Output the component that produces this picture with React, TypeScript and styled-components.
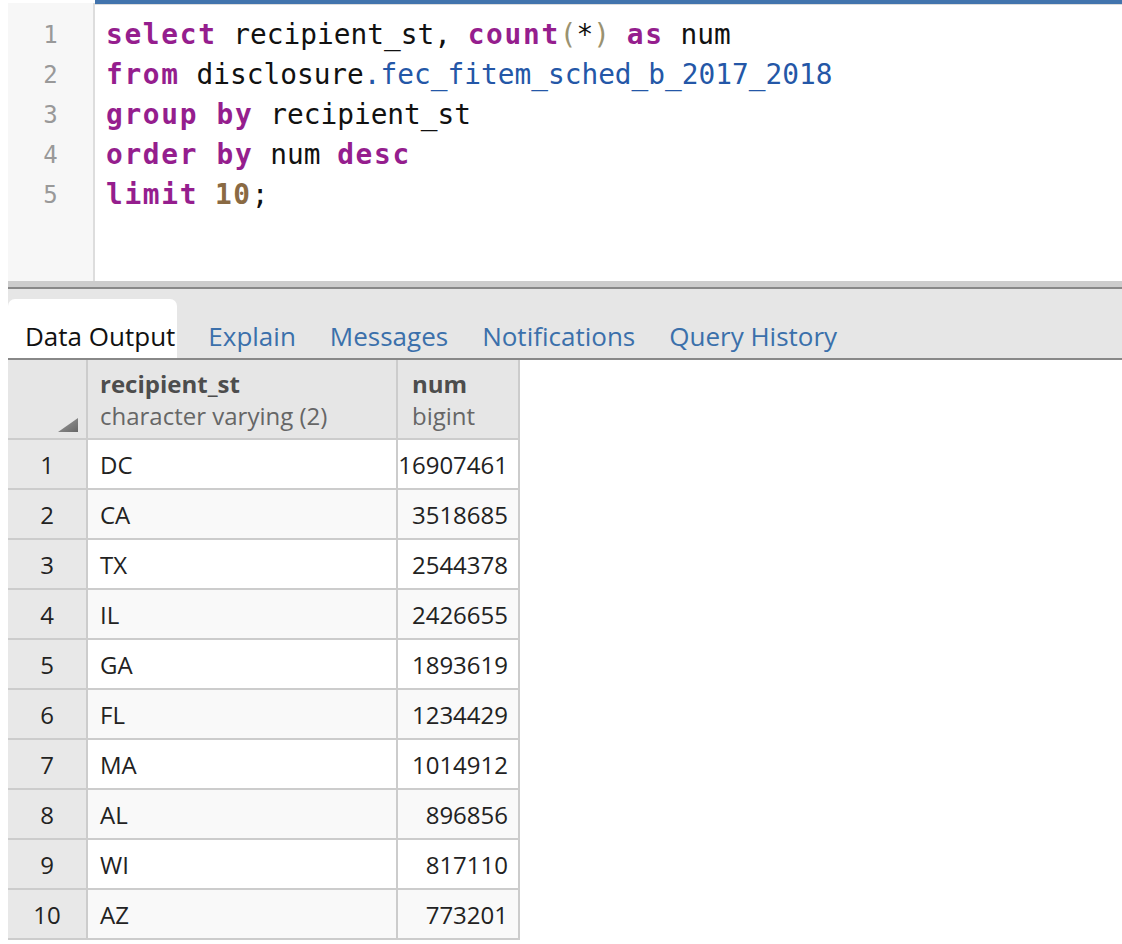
import React, { FC } from 'react';
import styled, { createGlobalStyle } from 'styled-components';

const GlobalStyle = createGlobalStyle`
  html, body {
    margin: 0;
    padding: 0;
    background: #ffffff;
  }
  body {
    font-family: "Open Sans", "Liberation Sans", sans-serif;
  }
`;

const Page = styled.div`
  width: 1122px;
  height: 944px;
  padding-left: 8px;
  box-sizing: border-box;
  overflow: hidden;
  background: #ffffff;
`;

const EditorRow = styled.div`
  display: flex;
  height: 281px;
`;

const Gutter = styled.div`
  width: 87px;
  margin-top: 3px;
  padding-top: 12px;
  background: #f7f7f7;
  border-right: 2px solid #dddddd;
  box-sizing: border-box;
`;

const LineNo = styled.div`
  height: 40px;
  line-height: 40px;
  text-align: center;
  font-family: "DejaVu Sans Mono", "Liberation Mono", monospace;
  font-size: 24px;
  color: #999999;
`;

const Code = styled.div`
  flex: 1;
  border-top: 4px solid #4274ad;
  box-shadow: inset 0 1px 0 #dcdcdc;
  padding: 11px 0 0 11px;
  font-family: "DejaVu Sans Mono", "Liberation Mono", monospace;
  font-size: 27.8px;
  color: #111111;
`;

const CodeLine = styled.div`
  height: 40px;
  line-height: 40px;
  white-space: pre;
`;

const Kw = styled.span`
  color: #951e8e;
  font-weight: bold;
  letter-spacing: 1.7px;
`;

const Var = styled.span`
  color: #2457a7;
`;

const Paren = styled.span`
  color: #9a9270;
`;

const Num = styled.span`
  color: #8a6a43;
  font-weight: bold;
  letter-spacing: 1.7px;
`;

const Splitter = styled.div`
  height: 6px;
  background: #cccccc;
  border-bottom: 2px solid #888888;
`;

const TabBar = styled.div`
  display: flex;
  align-items: flex-end;
  height: 69px;
  background: #e6e6e6;
  border-bottom: 2px solid #888888;
`;

const Tab = styled.div<{ $active?: boolean }>`
  height: 59px;
  box-sizing: border-box;
  padding: ${(p) => (p.$active ? '22px 2px 7px 17px' : '22px 17px 7px')};
  margin-right: ${(p) => (p.$active ? '14px' : '0')};
  line-height: 30px;
  font-size: 26px;
  border-radius: 7px 7px 0 0;
  background: ${(p) => (p.$active ? '#ffffff' : 'transparent')};
  color: ${(p) => (p.$active ? '#111111' : '#3b70ab')};
  white-space: nowrap;
`;

const Grid = styled.div`
  display: inline-grid;
  grid-template-columns: 78px 308px 120px;
  grid-template-rows: 78px;
  grid-auto-rows: 48px;
  gap: 2px;
  padding: 0 2px 2px 0;
  background: #cccccc;
  font-size: 24px;
  color: #222222;
`;

const HeadCell = styled.div<{ $pad?: number }>`
  position: relative;
  box-sizing: border-box;
  padding: 8px 0 0 ${(p) => p.$pad ?? 12}px;
  background: #e6e6e6;
  line-height: 32px;
`;

const HeadName = styled.div`
  font-weight: bold;
  color: #4d4d4d;
`;

const HeadType = styled.div`
  color: #666666;
`;

const SortMark = styled.svg`
  position: absolute;
  right: 8px;
  bottom: 6px;
`;

const RowNo = styled.div`
  background: #e8e8e8;
  display: flex;
  align-items: center;
  justify-content: center;
`;

const Cell = styled.div<{ $even?: boolean; $right?: boolean }>`
  background: ${(p) => (p.$even ? '#f9f9f9' : '#ffffff')};
  display: flex;
  align-items: center;
  justify-content: ${(p) => (p.$right ? 'flex-end' : 'flex-start')};
  padding: ${(p) => (p.$right ? '0 10px 0 0' : '0 0 0 12px')};
  white-space: nowrap;
`;

const rows: [string, string][] = [
  ['DC', '16907461'],
  ['CA', '3518685'],
  ['TX', '2544378'],
  ['IL', '2426655'],
  ['GA', '1893619'],
  ['FL', '1234429'],
  ['MA', '1014912'],
  ['AL', '896856'],
  ['WI', '817110'],
  ['AZ', '773201'],
];

const tabs = ['Data Output', 'Explain', 'Messages', 'Notifications', 'Query History'];

const App: FC = () => {
  return (
    <Page>
      <GlobalStyle />
      <EditorRow>
        <Gutter>
          {[1, 2, 3, 4, 5].map((n) => (
            <LineNo key={n}>{n}</LineNo>
          ))}
        </Gutter>
        <Code>
          <CodeLine>
            <Kw>select</Kw> recipient_st, <Kw>count</Kw>
            <Paren>(</Paren>*<Paren>)</Paren> <Kw>as</Kw> num
          </CodeLine>
          <CodeLine>
            <Kw>from</Kw> disclosure<Var>.fec_fitem_sched_b_2017_2018</Var>
          </CodeLine>
          <CodeLine>
            <Kw>group by</Kw> recipient_st
          </CodeLine>
          <CodeLine>
            <Kw>order by</Kw> num <Kw>desc</Kw>
          </CodeLine>
          <CodeLine>
            <Kw>limit</Kw> <Num>10</Num>;
          </CodeLine>
        </Code>
      </EditorRow>
      <Splitter />
      <TabBar>
        {tabs.map((t, i) => (
          <Tab key={t} $active={i === 0}>
            {t}
          </Tab>
        ))}
      </TabBar>
      <Grid>
        <HeadCell>
          <SortMark width="20" height="14" viewBox="0 0 20 14">
            <defs>
              <linearGradient id="sortgrad" x1="0" y1="0" x2="1" y2="1">
                <stop offset="0" stopColor="#a0a0a0" />
                <stop offset="1" stopColor="#666666" />
              </linearGradient>
            </defs>
            <polygon points="20,0 20,14 0,14" fill="url(#sortgrad)" />
          </SortMark>
        </HeadCell>
        <HeadCell>
          <HeadName>recipient_st</HeadName>
          <HeadType>character varying (2)</HeadType>
        </HeadCell>
        <HeadCell $pad={14}>
          <HeadName>num</HeadName>
          <HeadType>bigint</HeadType>
        </HeadCell>
        {rows.map(([st, n], i) => (
          <React.Fragment key={st}>
            <RowNo>{i + 1}</RowNo>
            <Cell $even={i % 2 === 1}>{st}</Cell>
            <Cell $even={i % 2 === 1} $right>
              {n}
            </Cell>
          </React.Fragment>
        ))}
      </Grid>
    </Page>
  );
};

export default App;
